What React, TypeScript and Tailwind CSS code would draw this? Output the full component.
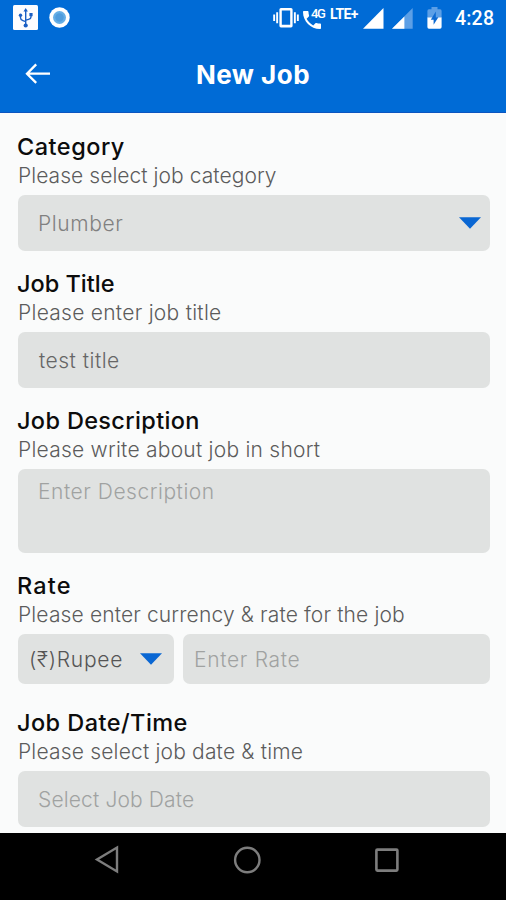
import React from 'react';

const fontStack = "font-[Inter,'Open_Sans',sans-serif]";

const StatusBar = () => (
  <div className="flex h-[35px] items-start text-white">
    <svg className="ml-[13px] mt-[5px] shrink-0" width="25" height="25" viewBox="0 0 25 25" fill="none">
      <rect width="25" height="25" rx="1.5" fill="#fdfdff" />
      <g stroke="#1b5fc4" strokeWidth="1.4">
        <path d="M12.7 5v16" />
        <path d="M7.5 10.5v2.2c0 1.6 1 2.4 2.4 2.9l2.8 1" />
        <path d="M18 9.5v2.4c0 1.4-1 2-2.4 2.4l-2.9 .9" />
      </g>
      <path d="M12.7 3l2.2 3.6h-4.4z" fill="#1b5fc4" />
      <circle cx="12.7" cy="20.5" r="2.1" fill="#1b5fc4" />
      <circle cx="7.5" cy="10.2" r="1.7" fill="#1b5fc4" />
      <rect x="16.4" y="8" width="3.2" height="3.2" fill="#1b5fc4" />
    </svg>
    <svg className="ml-[11px] mt-[7px] shrink-0" width="21" height="21" viewBox="0 0 21 21">
      <circle cx="10.5" cy="10.5" r="10.2" fill="#fff" />
      <circle cx="10.5" cy="10.5" r="6.5" fill="#64aee6" />
      <circle cx="10.5" cy="10.5" r="4.2" fill="#4f9cdd" />
    </svg>
    <svg className="ml-auto mt-2 shrink-0" width="26" height="20" viewBox="0 0 26 20" fill="#fff">
      <path fillRule="evenodd" d="M8 0h10a1.6 1.6 0 0 1 1.6 1.6v16.2a1.6 1.6 0 0 1-1.6 1.6H8a1.6 1.6 0 0 1-1.6-1.6V1.6A1.6 1.6 0 0 1 8 0zm.8 2.600v14.200h8.400V2.600z" />
      <path d="M3.2 4.2h1.9v11H3.2zM20.9 4.2h1.9v11h-1.9zM.2 6.4h1.9v6.6H.2zM23.9 6.4h1.9V13h-1.9z" />
    </svg>
    <div className="relative ml-1 h-[30px] w-[22px] shrink-0">
      <svg className="mt-[10.5px]" width="18" height="18" viewBox="3 3 18 18" fill="#fff">
        <path d="M6.62 10.79c1.44 2.83 3.76 5.14 6.59 6.59l2.2-2.2c.27-.27.67-.36 1.02-.24 1.12.37 2.33.57 3.57.57.55 0 1 .45 1 1V20c0 .55-.45 1-1 1-9.39 0-17-7.61-17-17 0-.55.45-1 1-1h3.5c.55 0 1 .45 1 1 0 1.25.2 2.45.57 3.57.11.35.03.74-.25 1.02z" />
      </svg>
      <span className="absolute left-[8px] top-[7px] font-[Roboto,sans-serif] text-[13px] font-medium leading-[13px] tracking-[-1.5px]">4G</span>
    </div>
    <span className="ml-[5px] mt-[7px] w-[31px] font-[Roboto,sans-serif] text-[14px] font-bold leading-[15px] tracking-[-0.6px]">LTE+</span>
    <svg className="ml-[2px] mt-2 shrink-0" width="21" height="21" viewBox="0 0 21 21">
      <path d="M20.5 0v20.8H0z" fill="#fff" />
    </svg>
    <svg className="ml-[8px] mt-2 shrink-0" width="21" height="21" viewBox="0 0 21 21">
      <path d="M20.7 0v20.8H0z" fill="#5c9fe6" />
      <path d="M12.4 8.5v12.3H0z" fill="#fff" />
    </svg>
    <svg className="ml-[14px] mt-[7px] shrink-0" width="15" height="22" viewBox="0 0 15 22">
      <path d="M4.5 0h6v2.3H13A1.6 1.6 0 0 1 14.6 4v7H.4V4A1.6 1.6 0 0 1 2 2.3h2.5z" fill="#5c9fe6" />
      <path d="M.4 10.5h14.2v9.6a1.6 1.6 0 0 1-1.6 1.6H2a1.6 1.6 0 0 1-1.6-1.6z" fill="#fff" />
      <path d="M8.8 4.5L3.8 12.8h2.8v5l4.800-7.600H8.800z" fill="#0d6ad2" />
    </svg>
    <span className="ml-[13px] mr-[11px] mt-[7px] w-10 whitespace-nowrap font-[Roboto,sans-serif] text-[19.5px] font-medium leading-[23px] tracking-[0.2px]">4:28</span>
  </div>
);

const Header = () => (
  <header className="h-[113px] border-b border-[#0b55c0] bg-[#006bd6]">
    <StatusBar />
    <div className="grid h-[77px] grid-cols-[60px_1fr_60px] items-center">
      <svg className="ml-[25px]" width="26" height="22" viewBox="0 0 26 22" fill="none" stroke="#fff" strokeWidth="2.3">
        <path d="M25 10.7H2.400M11.200 1.400L2 10.700l9.200 9.200" />
      </svg>
      <h1 className="mt-[3px] text-center text-[26px] font-bold leading-[30px] tracking-[0.5px] text-white">New Job</h1>
    </div>
  </header>
);

const Caret = () => (
  <svg className="shrink-0" width="22" height="12" viewBox="0 0 22 12">
    <path d="M0 .3h22L11 11.7z" fill="#0a67d3" />
  </svg>
);

type SectionProps = {
  title: string;
  titleClass: string;
  hint: string;
  hintClass: string;
  children: React.ReactNode;
};

const Section = ({ title, titleClass, hint, hintClass, children }: SectionProps) => (
  <section>
    <h2 className={`-ml-px pt-px whitespace-nowrap text-[23.5px] font-[450] leading-[30px] text-[#0c0c0c] ${titleClass}`}>{title}</h2>
    <p className={`mb-[5px] whitespace-nowrap text-[21px] font-light leading-7 text-[#5c5c5c] ${hintClass}`}>{hint}</p>
    {children}
  </section>
);

const NavBar = () => (
  <nav className="flex h-[67px] items-start bg-black">
    <svg className="ml-[94px] mt-[12px]" width="25" height="29" viewBox="0 0 25 29" fill="none" stroke="#7d7d7d" strokeWidth="2.4">
      <path d="M23 2.500v24L3 14.500z" />
    </svg>
    <svg className="ml-[114px] mt-[13px]" width="28" height="28" viewBox="0 0 28 28" fill="none" stroke="#7d7d7d" strokeWidth="2.4">
      <circle cx="14.3" cy="14" r="12.2" />
    </svg>
    <svg className="ml-[113px] mt-[14px]" width="26" height="26" viewBox="0 0 26 26" fill="none" stroke="#7d7d7d" strokeWidth="2.6">
      <rect x="2.4" y="2.6" width="21" height="21" rx="1" />
    </svg>
  </nav>
);

const App = () => {
  return (
    <div className={`flex h-[900px] w-[506px] flex-col overflow-hidden bg-[#fafbfb] ${fontStack}`}>
      <Header />
      <main className="flex h-[720px] flex-col gap-[17px] overflow-hidden pl-[18px] pr-4 pt-[18px]">
        <Section title="Category" titleClass="tracking-[0.5px]" hint="Please select job category" hintClass="tracking-[0.05px]">
          <div className="flex h-14 items-center justify-between rounded-[7px] bg-[#e0e2e1] pl-5 pr-[9px]">
            <span className="pt-0.5 text-[21px] font-light tracking-[0.6px] text-[#808080]">Plumber</span>
            <Caret />
          </div>
        </Section>
        <Section title="Job Title" titleClass="tracking-[0px]" hint="Please enter job title" hintClass="tracking-[0.27px]">
          <div className="flex h-14 items-center rounded-[7px] bg-[#e0e2e1] pl-[21px]">
            <span className="pt-0.5 text-[21px] font-light tracking-[0.5px] text-[#666]">test title</span>
          </div>
        </Section>
        <Section title="Job Description" titleClass="tracking-[0.35px]" hint="Please write about job in short" hintClass="tracking-[0.24px]">
          <div className="h-[84px] rounded-[7px] bg-[#e0e2e1] pl-5 pt-[9px]">
            <span className="block text-[21px] font-light leading-7 tracking-[0.53px] text-[#a0a2a1]">Enter Description</span>
          </div>
        </Section>
        <Section title="Rate" titleClass="tracking-[1.2px]" hint="Please enter currency & rate for the job" hintClass="tracking-[0.14px]">
          <div className="flex gap-[9px]">
            <div className="flex h-[50px] w-[156px] items-center justify-between rounded-[7px] bg-[#e0e2e1] pl-[11px] pr-3">
              <span className="pt-0.5 text-[21px] font-light tracking-[0.75px] text-[#555]">(₹)Rupee</span>
              <Caret />
            </div>
            <div className="flex h-[50px] flex-1 items-center rounded-[7px] bg-[#e0e2e1] pl-[11px]">
              <span className="pt-0.5 text-[21px] font-light tracking-[0.68px] text-[#a0a2a1]">Enter Rate</span>
            </div>
          </div>
        </Section>
        <div className="pt-1.5">
          <Section title="Job Date/Time" titleClass="tracking-[0.45px]" hint="Please select job date & time" hintClass="tracking-[0.18px]">
            <div className="flex h-14 items-center rounded-[7px] bg-[#e0e2e1] pl-5">
              <span className="pt-0.5 text-[21px] font-light tracking-[0.14px] text-[#a0a2a1]">Select Job Date</span>
            </div>
          </Section>
        </div>
      </main>
      <NavBar />
    </div>
  );
};

export default App;
